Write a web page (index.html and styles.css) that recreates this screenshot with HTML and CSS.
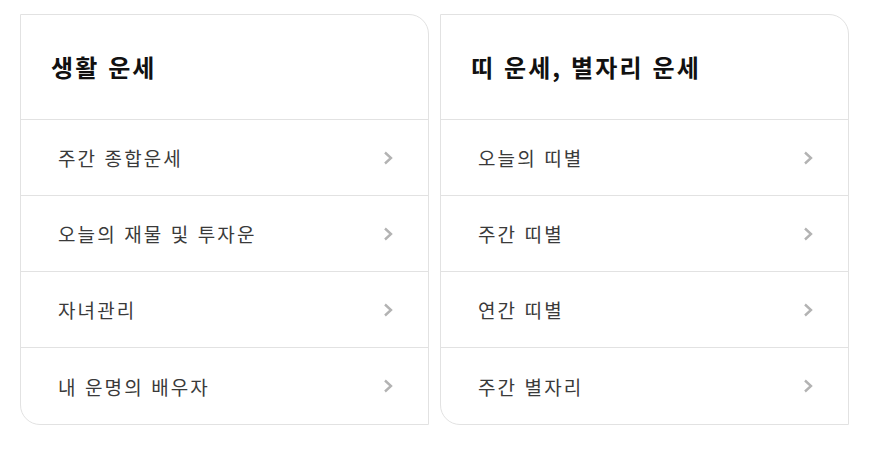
FILE: index.html
```html
<!DOCTYPE html>
<html lang="ko">
<head>
<meta charset="utf-8">
<link rel="stylesheet" href="styles.css">
</head>
<body>
<div class="wrap">
  <section class="card">
    <h2 class="card-title">생활 운세</h2>
    <ul class="list">
      <li class="item"><span>주간 종합운세</span><svg class="chev" viewBox="0 0 10 14"><path d="M2 1.5l6 5.5-6 5.5"/></svg></li>
      <li class="item"><span>오늘의 재물 및 투자운</span><svg class="chev" viewBox="0 0 10 14"><path d="M2 1.5l6 5.5-6 5.5"/></svg></li>
      <li class="item"><span>자녀관리</span><svg class="chev" viewBox="0 0 10 14"><path d="M2 1.5l6 5.5-6 5.5"/></svg></li>
      <li class="item"><span>내 운명의 배우자</span><svg class="chev" viewBox="0 0 10 14"><path d="M2 1.5l6 5.5-6 5.5"/></svg></li>
    </ul>
  </section>
  <section class="card">
    <h2 class="card-title">띠 운세, 별자리 운세</h2>
    <ul class="list">
      <li class="item"><span>오늘의 띠별</span><svg class="chev" viewBox="0 0 10 14"><path d="M2 1.5l6 5.5-6 5.5"/></svg></li>
      <li class="item"><span>주간 띠별</span><svg class="chev" viewBox="0 0 10 14"><path d="M2 1.5l6 5.5-6 5.5"/></svg></li>
      <li class="item"><span>연간 띠별</span><svg class="chev" viewBox="0 0 10 14"><path d="M2 1.5l6 5.5-6 5.5"/></svg></li>
      <li class="item"><span>주간 별자리</span><svg class="chev" viewBox="0 0 10 14"><path d="M2 1.5l6 5.5-6 5.5"/></svg></li>
    </ul>
  </section>
</div>
</body>
</html>
```
FILE: styles.css
```css
* { box-sizing: border-box; }
body {
  margin: 0;
  background: #fff;
  font-family: "Noto Sans CJK KR", "Noto Sans", sans-serif;
}
.wrap {
  display: flex;
  gap: 11px;
  padding: 14px 0 0 20px;
}
.card {
  width: 409px;
  border: 1px solid #e2e2e2;
  border-radius: 0 20px 0 20px;
  overflow: hidden;
}
.card-title {
  margin: 0;
  height: 105px;
  display: flex;
  align-items: center;
  padding: 0 0 2px 30px;
  font-size: 24px;
  font-weight: 700;
  color: #111;
  border-bottom: 1px solid #e2e2e2;
  letter-spacing: 2.1px;
}
.list {
  list-style: none;
  margin: 0;
  padding: 0;
}
.item {
  height: 76px;
  display: flex;
  align-items: center;
  justify-content: space-between;
  padding: 0 35px 0 37px;
  font-size: 19px;
  font-weight: 400;
  color: #3a3a3a;
  border-bottom: 1px solid #e2e2e2;
  letter-spacing: 2.1px;
}
.item:last-child { border-bottom: none; }
.chev {
  width: 10px;
  height: 14px;
  fill: none;
  stroke: #b3b3b3;
  stroke-width: 2.4;
}
```
